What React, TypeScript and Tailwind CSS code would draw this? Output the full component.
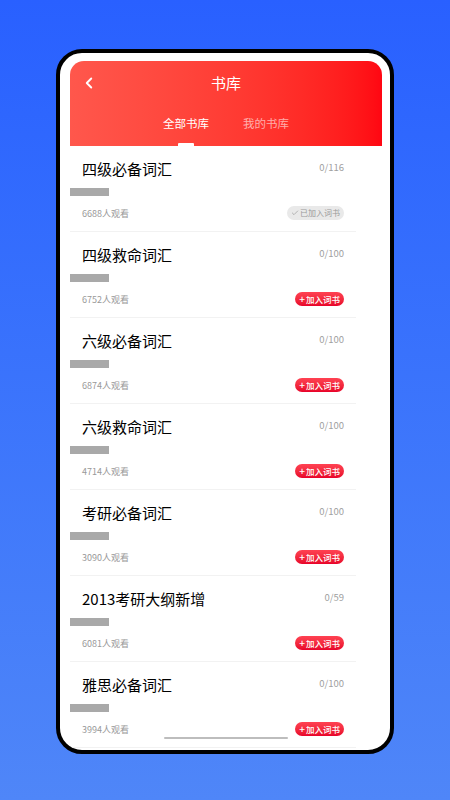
import { ChevronLeft, Check } from "lucide-react";

type Book = {
  title: string;
  total: number;
  views: number;
  added?: boolean;
};

const books: Book[] = [
  { title: "四级必备词汇", total: 116, views: 6688, added: true },
  { title: "四级救命词汇", total: 100, views: 6752 },
  { title: "六级必备词汇", total: 100, views: 6874 },
  { title: "六级救命词汇", total: 100, views: 4714 },
  { title: "考研必备词汇", total: 100, views: 3090 },
  { title: "2013考研大纲新增", total: 59, views: 6081 },
  { title: "雅思必备词汇", total: 100, views: 3994 },
];

function BookRow({ book }: { book: Book }) {
  return (
    <div className="w-[286px] h-[86px] shrink-0 relative border-b border-[#f2f2f2]">
      <div className="absolute left-[12px] top-[12px] text-[15px] leading-[22px] text-black">{book.title}</div>
      <div className="absolute right-[12px] top-[14px] text-[9.5px] leading-[14px] text-[#a0a0a0]">0/{book.total}</div>
      <div className="absolute left-0 top-[42px] w-[39px] h-[8px] bg-[#a9a9a9]" />
      <div className="absolute left-[12px] top-[61px] text-[9px] leading-[13px] text-[#999]">{book.views}人观看</div>
      {book.added ? (
        <div className="absolute right-[12px] top-[60px] h-[14px] px-[4px] rounded-full bg-[#e9e9e9] flex items-center gap-[1px] text-[8px] leading-none text-[#999]">
          <Check size={8} strokeWidth={2} />
          <span>已加入词书</span>
        </div>
      ) : (
        <div className="absolute right-[12px] top-[60px] h-[14px] px-[4px] rounded-full bg-gradient-to-b from-[#ff4152] to-[#e8002a] flex items-center gap-[1px] text-[8.5px] leading-none font-medium text-white">
          <span className="text-[10px] leading-none">+</span>
          <span>加入词书</span>
        </div>
      )}
    </div>
  );
}

export default function App() {
  return (
    <div
      className="w-[450px] h-[800px] bg-gradient-to-b from-[#2960ff] to-[#4f86f8] flex justify-center pt-[49px]"
      style={{ fontFamily: '"Noto Sans CJK SC", "Noto Sans", sans-serif' }}
    >
      <div className="w-[338px] h-[705px] border-[4px] border-black rounded-[26px] bg-white pl-[10px] pr-[8px] pt-[8px] overflow-hidden relative">
        <div className="w-[312px] h-full flex flex-col">
          <div className="h-[85px] shrink-0 rounded-t-[14px] bg-gradient-to-r from-[#ff574c] to-[#ff0612] relative text-white">
            <ChevronLeft size={18} strokeWidth={2.5} className="absolute left-[10px] top-[13px]" />
            <div className="text-center pt-[11px] text-[15px] leading-[22px]">书库</div>
            <div className="flex justify-center gap-[34px] pt-[20px] text-[11.5px] leading-[18px]">
              <div>全部书库</div>
              <div className="text-white/60">我的书库</div>
            </div>
            <div className="absolute left-[108px] bottom-0 w-[16px] h-[3px] bg-white rounded-t-[1px]" />
          </div>
          <div className="flex-1 flex flex-col">
            {books.map((b) => (
              <BookRow key={b.title} book={b} />
            ))}
          </div>
        </div>
        <div className="absolute left-[104px] bottom-[11px] w-[124px] h-[2px] bg-[#bdbdbd] rounded-full" />
      </div>
    </div>
  );
}
